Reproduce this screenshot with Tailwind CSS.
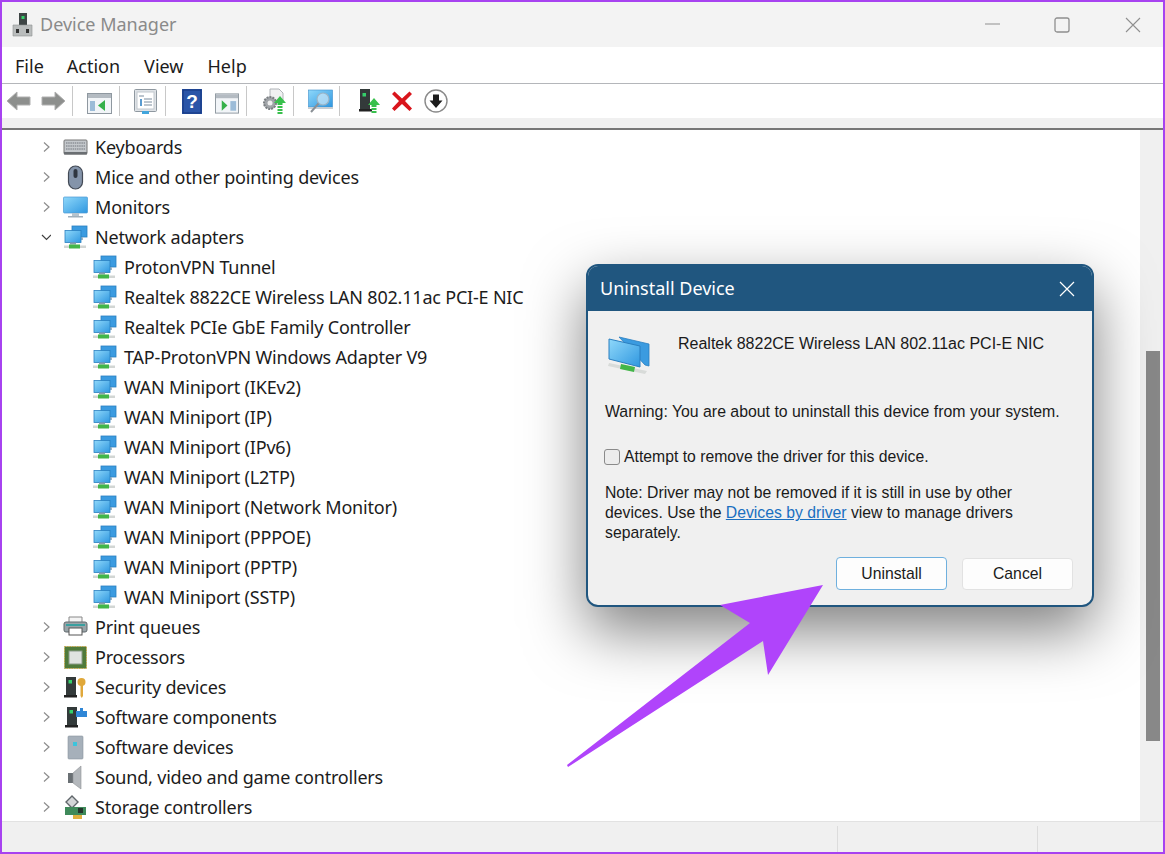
<!DOCTYPE html>
<html lang="en">
<head>
    <meta charset="UTF-8">
    <title>Device Manager</title>
    <script src="https://cdn.jsdelivr.net/npm/@tailwindcss/browser@4"></script>
</head>
<body class="bg-[#a742f0] w-[1165px] h-[854px] overflow-hidden">
    <!-- shared icons -->
    <svg class="absolute w-0 h-0">
        <defs>
            <linearGradient id="scr" x1="0" y1="0" x2="1" y2="1"><stop offset="0" stop-color="#8fd8fa"/><stop offset="1" stop-color="#2f97e0"/></linearGradient>
            <symbol id="net" viewBox="0 0 25 25">
                <rect x="9" y="1" width="15" height="11" fill="#3b9be0" stroke="#2a7fc0" stroke-width="0.800"/>
                <rect x="9" y="12" width="11" height="3" fill="#9fb4c4"/>
                <rect x="2" y="5.500" width="16" height="12" fill="url(#scr)" stroke="#2a7fc0" stroke-width="0.800"/>
                <rect x="7" y="17.500" width="6" height="2" fill="#8aa0b0"/>
                <rect x="1" y="20.500" width="22" height="2.500" fill="#d2d6d4"/>
                <rect x="6" y="19.500" width="11" height="4" fill="#43b649"/>
            </symbol>
            <symbol id="chev-r" viewBox="0 0 10 12"><path d="M3 1.500 8 6 3 10.500" fill="none" stroke="#8c8c8c" stroke-width="1.200"/></symbol>
            <symbol id="chev-d" viewBox="0 0 10 12"><path d="M1 4 5.500 8.500 10 4" fill="none" stroke="#404040" stroke-width="1.200"/></symbol>
            <symbol id="tower" viewBox="0 0 25 25">
                <path d="M3 2h10v18H3z" fill="#333a3a"/>
                <rect x="5.500" y="5" width="3.500" height="3.500" fill="#35d06a"/>
                <rect x="1" y="20" width="13" height="2.500" fill="#222"/>
            </symbol>
        </defs>
    </svg>

    <div class="m-[2px] w-[1161px] h-[850px] bg-white flex flex-col relative overflow-hidden font-['Noto_Sans',sans-serif] text-[18px] text-[#1c1c1c]">
        <!-- Title bar -->
        <div class="h-[45px] bg-[#f3f3f3] flex items-center shrink-0">
            <svg class="ml-[10px] w-[21px] h-[25px]" viewBox="0 0 21 25">
                <path d="M7 1h8v12H7z" fill="#3d4444"/>
                <rect x="9.500" y="4" width="3" height="3" fill="#35d06a"/>
                <path d="M1 13h19v11H1z" fill="#b9bcbc" stroke="#8e9292" stroke-width="0.600"/>
                <rect x="4" y="17" width="3" height="4" fill="#333"/>
                <rect x="14" y="17" width="3" height="4" fill="#333"/>
            </svg>
            <span class="ml-[7px] text-[#8a8a8a]">Device Manager</span>
            <div class="ml-auto flex items-center">
                <svg class="w-[16px] h-[16px] -mt-[2px]" viewBox="0 0 16 16"><path d="M0 8h15" stroke="#8f8f8f" stroke-width="1"/></svg>
                <svg class="ml-[53px] w-[16px] h-[16px]" viewBox="0 0 16 16"><rect x="1" y="1" width="14" height="14" rx="2" fill="none" stroke="#8f8f8f" stroke-width="1.300"/></svg>
                <svg class="ml-[55px] mr-[22px] w-[16px] h-[16px]" viewBox="0 0 16 16"><path d="M1 1 15 15M15 1 1 15" stroke="#8f8f8f" stroke-width="1.100"/></svg>
            </div>
        </div>
        <!-- Menu -->
        <div class="h-[36px] shrink-0 flex items-center pt-[2px]">
            <span class="ml-[13px]">File</span>
            <span class="ml-[23px]">Action</span>
            <span class="ml-[24px]">View</span>
            <span class="ml-[24px]">Help</span>
        </div>
        <div class="h-[1px] bg-[#b4b6ba] shrink-0"></div>
        <!-- Toolbar -->
        <div class="h-[34px] shrink-0 flex items-center">
            <svg class="ml-[4px] w-[25px] h-[22px]" viewBox="0 0 25 22"><path d="M1 11 11 2v5h13v8H11v5z" fill="#8d8f8d" stroke="#b0b0b0"/></svg>
            <svg class="ml-[10px] w-[25px] h-[22px]" viewBox="0 0 25 22"><path d="M24 11 14 2v5H1v8h13v5z" fill="#8d8f8d" stroke="#b0b0b0"/></svg>
            <div class="ml-[6px] w-[1px] h-[30px] bg-[#c8c8c8]"></div>
            <svg class="ml-[14px] w-[25px] h-[21px] mt-[4px]" viewBox="0 0 25 21">
                <rect x="0.500" y="0.500" width="24" height="20" fill="#f2f5f8" stroke="#8f98a0"/><rect x="1" y="1" width="23" height="4" fill="#b4bbc2"/>
                <rect x="3" y="8" width="5" height="10" fill="#9cbcd8"/><path d="M18 7v11l-7-5.500z" fill="#35b04a"/>
            </svg>
            <div class="ml-[7px] w-[1px] h-[30px] bg-[#c8c8c8]"></div>
            <svg class="ml-[14px] w-[23px] h-[25px]" viewBox="0 0 23 25">
                <rect x="0.500" y="0.500" width="22" height="22" rx="1" fill="#dfe3e7" stroke="#8f98a0"/><rect x="3" y="3" width="17" height="17" fill="#fff" stroke="#c2c8ce"/>
                <path d="M5 7h5M10 10h8M10 13h8M10 16h8" stroke="#7a8c9e"/><rect x="6" y="10" width="2" height="7" fill="#5a9bd0"/><rect x="8" y="22" width="7" height="3" fill="#41a5dc"/>
            </svg>
            <div class="ml-[8px] w-[1px] h-[30px] bg-[#c8c8c8]"></div>
            <svg class="ml-[16px] w-[20px] h-[25px]" viewBox="0 0 20 25">
                <rect width="20" height="25" fill="#2a55a8"/><rect x="1" y="1" width="18" height="23" fill="none" stroke="#12357c"/>
                <text x="10" y="19" text-anchor="middle" fill="#fff" font-size="19" font-weight="700" font-family="Liberation Sans">?</text>
            </svg>
            <svg class="ml-[13px] w-[24px] h-[21px] mt-[4px]" viewBox="0 0 25 21">
                <rect x="0.500" y="0.500" width="24" height="20" fill="#f2f5f8" stroke="#8f98a0"/><rect x="1" y="1" width="23" height="4" fill="#b4bbc2"/>
                <path d="M7 7v11l6-5.500z" fill="#35b04a"/><rect x="16" y="8" width="6" height="10" fill="#9cbcd8"/>
            </svg>
            <div class="ml-[7px] w-[1px] h-[30px] bg-[#c8c8c8]"></div>
            <svg class="ml-[14px] w-[26px] h-[26px]" viewBox="0 0 26 26">
                <path d="M9 1h9l4 4v8H9z" fill="#f0f1f2" stroke="#b0b4b8"/>
                <circle cx="9" cy="15" r="6" fill="#a0a4a8" stroke="#7a7e82" stroke-width="2" stroke-dasharray="2 1"/><circle cx="9" cy="15" r="2.500" fill="#eee"/>
                <path d="M19 8l6 7h-3.500v2h-5v-2H13z" fill="#38c04c"/><path d="M16.500 19h5M16.500 22h5M16.500 25h5" stroke="#38c04c" stroke-width="1.800"/>
            </svg>
            <div class="ml-[6px] w-[1px] h-[30px] bg-[#c8c8c8]"></div>
            <svg class="ml-[14px] w-[25px] h-[25px]" viewBox="0 0 25 25">
                <rect x="0.500" y="1" width="24" height="17" fill="url(#scr)" stroke="#3d8ecb" stroke-width="0.600"/>
                <rect x="0" y="18" width="25" height="2" fill="#c6ced4"/>
                <circle cx="15" cy="10" r="6" fill="#cfe8f8" fill-opacity="0.700" stroke="#9ab4c6" stroke-width="1.200"/>
                <path d="M10.500 14.500 3 23" stroke="#8a9096" stroke-width="2"/>
            </svg>
            <div class="ml-[6px] w-[1px] h-[30px] bg-[#c8c8c8]"></div>
            <svg class="ml-[19px] w-[22px] h-[26px]" viewBox="0 0 22 26">
                <path d="M1 1h10v20H1z" fill="#333a3a"/><rect x="3.500" y="5" width="3.500" height="3.500" fill="#35d06a"/><rect x="0" y="21" width="13" height="2.500" fill="#222"/>
                <path d="M15 10l6 7h-3.500v2h-5v-2H9z" fill="#38c04c"/><path d="M12.500 21h5M12.500 24h5" stroke="#38c04c" stroke-width="1.800"/>
            </svg>
            <svg class="ml-[10px] w-[22px] h-[22px]" viewBox="0 0 22 22"><path d="M3.500 1.500 11 8.500l7.500-7 2.500 2.500-7 7 7 7.500-2.500 2.500-7.500-7-7.500 7L1 18.500l7-7.500-7-7z" fill="#d9151c"/></svg>
            <svg class="ml-[11px] w-[24px] h-[24px]" viewBox="0 0 24 24">
                <circle cx="12" cy="12" r="11" fill="#fff" stroke="#8a8a8a" stroke-width="1.400"/>
                <path d="M9 5.500h6v6h3.500L12 19l-6.500-7.500H9z" fill="#1c1c1c"/>
            </svg>
        </div>
        <div class="h-[10px] bg-[#f0f0f0] shrink-0"></div>
        <div class="h-[2px] bg-[#777] shrink-0"></div>

        <!-- Device tree -->
        <div class="flex flex-1 min-h-0">
            <div class="flex-1 min-w-0 overflow-hidden pt-[2px] tracking-[-0.2px]">
                <div class="h-[30px] flex items-center pl-[39px]"><svg class="w-[10px] h-[12px]"><use href="#chev-r"/></svg>
                    <svg class="ml-[12px] w-[25px] h-[25px]" viewBox="0 0 25 25"><rect x="1" y="5" width="23" height="14" rx="1" fill="#c4c8cc" stroke="#777"/><path d="M3 8h19M3 11h19M3 14h19" stroke="#8c9096" stroke-width="1.500" stroke-dasharray="1.500 0.700"/><rect x="1" y="17" width="23" height="2.500" fill="#6a6e72"/></svg>
                    <span class="ml-[7px]">Keyboards</span></div>
                <div class="h-[30px] flex items-center pl-[39px]"><svg class="w-[10px] h-[12px]"><use href="#chev-r"/></svg>
                    <svg class="ml-[12px] w-[25px] h-[25px]" viewBox="0 0 25 25"><rect x="5.500" y="1" width="14" height="23" rx="7" fill="#8494aa" stroke="#434a55" stroke-width="1.200"/><rect x="10.500" y="4" width="4" height="9" rx="2" fill="#2f3640"/></svg>
                    <span class="ml-[7px]">Mice and other pointing devices</span></div>
                <div class="h-[30px] flex items-center pl-[39px]"><svg class="w-[10px] h-[12px]"><use href="#chev-r"/></svg>
                    <svg class="ml-[12px] w-[25px] h-[25px]" viewBox="0 0 25 25"><rect x="0.500" y="2" width="24" height="16" rx="1" fill="url(#scr)" stroke="#4a9ad4" stroke-width="0.700"/><rect x="9" y="18" width="7" height="3" fill="#b6c4ce"/><rect x="5" y="21" width="15" height="1.500" fill="#a0b0bc"/></svg>
                    <span class="ml-[7px]">Monitors</span></div>
                <div class="h-[30px] flex items-center pl-[39px]"><svg class="w-[10px] h-[12px]"><use href="#chev-d"/></svg>
                    <svg class="ml-[12px] w-[25px] h-[25px]"><use href="#net"/></svg>
                    <span class="ml-[7px]">Network adapters</span></div>
                <div class="h-[30px] flex items-center pl-[90px]"><svg class="w-[25px] h-[25px]"><use href="#net"/></svg><span class="ml-[7px]">ProtonVPN Tunnel</span></div>
                <div class="h-[30px] flex items-center pl-[90px]"><svg class="w-[25px] h-[25px]"><use href="#net"/></svg><span class="ml-[7px]">Realtek 8822CE Wireless LAN 802.11ac PCI-E NIC</span></div>
                <div class="h-[30px] flex items-center pl-[90px]"><svg class="w-[25px] h-[25px]"><use href="#net"/></svg><span class="ml-[7px]">Realtek PCIe GbE Family Controller</span></div>
                <div class="h-[30px] flex items-center pl-[90px]"><svg class="w-[25px] h-[25px]"><use href="#net"/></svg><span class="ml-[7px]">TAP-ProtonVPN Windows Adapter V9</span></div>
                <div class="h-[30px] flex items-center pl-[90px]"><svg class="w-[25px] h-[25px]"><use href="#net"/></svg><span class="ml-[7px]">WAN Miniport (IKEv2)</span></div>
                <div class="h-[30px] flex items-center pl-[90px]"><svg class="w-[25px] h-[25px]"><use href="#net"/></svg><span class="ml-[7px]">WAN Miniport (IP)</span></div>
                <div class="h-[30px] flex items-center pl-[90px]"><svg class="w-[25px] h-[25px]"><use href="#net"/></svg><span class="ml-[7px]">WAN Miniport (IPv6)</span></div>
                <div class="h-[30px] flex items-center pl-[90px]"><svg class="w-[25px] h-[25px]"><use href="#net"/></svg><span class="ml-[7px]">WAN Miniport (L2TP)</span></div>
                <div class="h-[30px] flex items-center pl-[90px]"><svg class="w-[25px] h-[25px]"><use href="#net"/></svg><span class="ml-[7px]">WAN Miniport (Network Monitor)</span></div>
                <div class="h-[30px] flex items-center pl-[90px]"><svg class="w-[25px] h-[25px]"><use href="#net"/></svg><span class="ml-[7px]">WAN Miniport (PPPOE)</span></div>
                <div class="h-[30px] flex items-center pl-[90px]"><svg class="w-[25px] h-[25px]"><use href="#net"/></svg><span class="ml-[7px]">WAN Miniport (PPTP)</span></div>
                <div class="h-[30px] flex items-center pl-[90px]"><svg class="w-[25px] h-[25px]"><use href="#net"/></svg><span class="ml-[7px]">WAN Miniport (SSTP)</span></div>
                <div class="h-[30px] flex items-center pl-[39px]"><svg class="w-[10px] h-[12px]"><use href="#chev-r"/></svg>
                    <svg class="ml-[12px] w-[25px] h-[25px]" viewBox="0 0 25 25"><path d="M6 2h13v6H6z" fill="#f4f4f4" stroke="#888"/><rect x="1" y="7" width="23" height="10" rx="2" fill="#9aa4a8" stroke="#60686c"/><rect x="6" y="13" width="13" height="7" fill="#fff" stroke="#555"/><rect x="3" y="9" width="19" height="2" fill="#3aa0a0"/></svg>
                    <span class="ml-[7px]">Print queues</span></div>
                <div class="h-[30px] flex items-center pl-[39px]"><svg class="w-[10px] h-[12px]"><use href="#chev-r"/></svg>
                    <svg class="ml-[12px] w-[25px] h-[25px]" viewBox="0 0 25 25"><rect x="1.500" y="1.500" width="22" height="22" fill="#4f7a3a" stroke="#c4a64a" stroke-dasharray="1.500 1"/><rect x="6" y="6" width="13" height="13" fill="#dfe3e0" stroke="#8a9a88"/></svg>
                    <span class="ml-[7px]">Processors</span></div>
                <div class="h-[30px] flex items-center pl-[39px]"><svg class="w-[10px] h-[12px]"><use href="#chev-r"/></svg>
                    <svg class="ml-[12px] w-[25px] h-[25px]"><use href="#tower"/><circle cx="18.500" cy="7" r="4" fill="#e0a83a"/><path d="M17.500 10h2.500v11l-1.200 2-1.300-2z" fill="#e0a83a"/></svg>
                    <span class="ml-[7px]">Security devices</span></div>
                <div class="h-[30px] flex items-center pl-[39px]"><svg class="w-[10px] h-[12px]"><use href="#chev-r"/></svg>
                    <svg class="ml-[13px] w-[25px] h-[25px]"><use href="#tower"/><path d="M12 6h4V3h3v3h4v6H12z" fill="#2f86d6"/></svg>
                    <span class="ml-[6px]">Software components</span></div>
                <div class="h-[30px] flex items-center pl-[39px]"><svg class="w-[10px] h-[12px]"><use href="#chev-r"/></svg>
                    <svg class="ml-[12px] w-[25px] h-[25px]" viewBox="0 0 25 25"><rect x="5" y="1" width="15" height="23" rx="1" fill="#a6b0ba" stroke="#8c96a0" stroke-width="0.600"/><rect x="10" y="7" width="4" height="4" fill="#3cc4dc"/></svg>
                    <span class="ml-[7px]">Software devices</span></div>
                <div class="h-[30px] flex items-center pl-[39px]"><svg class="w-[10px] h-[12px]"><use href="#chev-r"/></svg>
                    <svg class="ml-[12px] w-[25px] h-[25px]" viewBox="0 0 25 25"><rect x="5" y="8" width="6" height="10" fill="#6a7074"/><path d="M10 8 18 1v23l-8-6z" fill="#b4b8bc" stroke="#8e9296" stroke-width="0.600"/></svg>
                    <span class="ml-[7px]">Sound, video and game controllers</span></div>
                <div class="h-[30px] flex items-center pl-[39px]"><svg class="w-[10px] h-[12px]"><use href="#chev-r"/></svg>
                    <svg class="ml-[12px] w-[25px] h-[25px]" viewBox="0 0 25 25"><path d="M3 7 9 1l6 6-6 6z" fill="#d4d6d8" stroke="#60666a" stroke-width="1.400"/><rect x="2" y="12" width="21" height="8" fill="#3f8a5a"/><rect x="10" y="20" width="9" height="4" fill="#e0b040"/><rect x="15" y="13" width="5" height="5" fill="#24352c"/></svg>
                    <span class="ml-[7px]">Storage controllers</span></div>
            </div>
            <!-- Scrollbar -->
            <div class="w-[23px] shrink-0 bg-[#f0f0f0] pl-[6px] pt-[221px]">
                <div class="w-[14px] h-[390px] bg-[#888]"></div>
            </div>
        </div>

        <!-- Status bar -->
        <div class="h-[31px] shrink-0 bg-[#f0f0f0] border-t border-[#e2e2e2] flex justify-end">
            <div class="w-[200px] mt-[4px] border-l border-[#dcdcdc]"></div>
            <div class="w-[126px] mt-[4px] border-l border-[#dcdcdc]"></div>
        </div>

        <!-- Uninstall dialog -->
        <div class="absolute left-[584px] top-[262px] w-[508px] h-[343px] rounded-[12px] border-2 border-[#20567f] bg-[#f0f0f0] shadow-[0_24px_60px_rgba(0,0,0,0.5)] font-['Liberation_Sans',sans-serif] text-[15.750px] text-[#1a1a1a]">
            <div class="h-[45px] bg-[#20567f] rounded-t-[10px] flex items-center justify-between pl-[12px] pr-[17px]">
                <span class="font-['Noto_Sans',sans-serif] text-[18px] text-white">Uninstall Device</span>
                <svg class="w-[16px] h-[16px]" viewBox="0 0 16 16"><path d="M1 1 15 15M15 1 1 15" stroke="#fff" stroke-width="1.200"/></svg>
            </div>
            <div class="flex pl-[19px] pt-[22px]">
                <svg class="w-[44px] h-[42px]" viewBox="0 0 44 42">
                    <path d="M12 4 42 11v22l-4-1z" fill="#3b9be0" stroke="#2a7fc0" stroke-width="0.800"/>
                    <path d="M2 6 33 13v21L2 26z" fill="url(#scr)" stroke="#2a7fc0" stroke-width="1"/>
                    <path d="M2 30 40 38l-2 3L1 33z" fill="#d8dbd9"/><path d="M14 31 28 34l-1 5-14-3z" fill="#43b649"/>
                </svg>
                <span class="ml-[27px] -mt-[1px] text-[16px]">Realtek 8822CE Wireless LAN 802.11ac PCI-E NIC</span>
            </div>
            <p class="ml-[17px] mt-[25px] text-[15.850px]">Warning: You are about to uninstall this device from your system.</p>
            <div class="ml-[16px] mt-[21px] flex items-center">
                <span class="w-[16px] h-[16px] rounded-[3px] border border-[#8a8a8a] bg-[#ececec]"></span>
                <span class="ml-[4px]">Attempt to remove the driver for this device.</span>
            </div>
            <div class="ml-[17px] mt-[15px] leading-[20px]">
                <p>Note: Driver may not be removed if it is still in use by other</p>
                <p>devices. Use the <span class="text-[#1a6fc0] underline">Devices by driver</span> view to manage drivers</p>
                <p>separately.</p>
            </div>
            <div class="absolute left-[248px] top-[291px] flex gap-[15px] items-start">
                <div class="w-[111px] h-[33px] rounded-[4px] border border-[#6fb0de] bg-[#fdfdfd] flex items-center justify-center">Uninstall</div>
                <div class="w-[111px] h-[32px] mt-[1px] rounded-[4px] border border-[#e2e2e2] bg-[#fdfdfd] flex items-center justify-center">Cancel</div>
            </div>
        </div>

        <!-- Callout arrow -->
        <svg class="absolute left-[-2px] top-[-2px] w-[1165px] h-[854px] pointer-events-none" viewBox="0 0 1165 854">
            <path d="M823 585 720 605 750 623 567 765 568 767 763 641 768 675z" fill="#b044fb"/>
        </svg>
    </div>
</body>
</html>
